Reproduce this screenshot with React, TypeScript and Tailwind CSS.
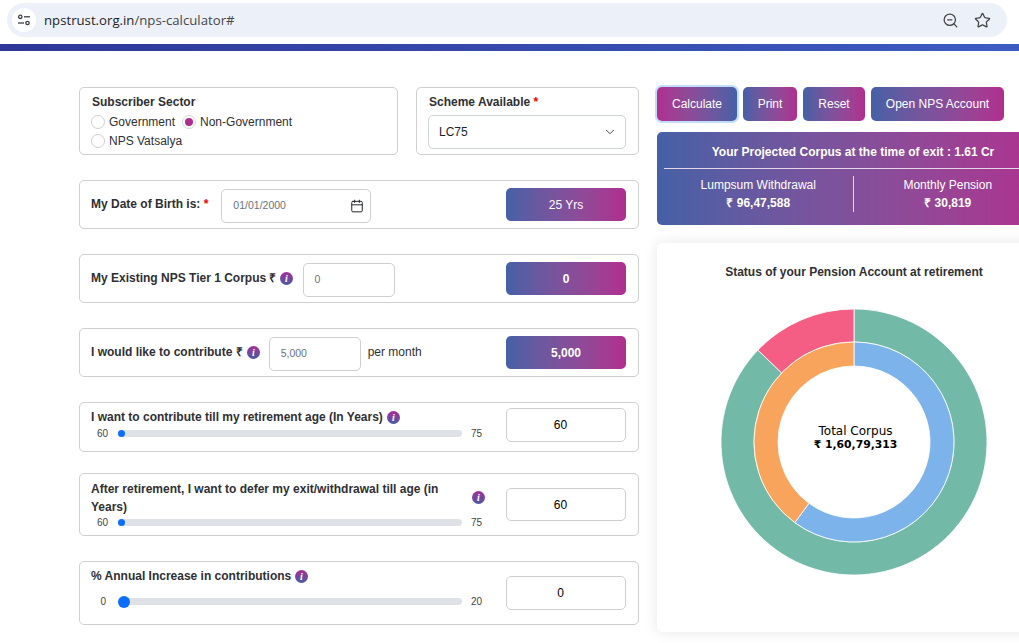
import React from "react";
import { Calendar, ChevronDown, Star, ZoomOut } from "lucide-react";

const sans = "font-['Liberation_Sans',Arial,sans-serif]";
const box = "rounded-[5px] border border-[#cfcfcf] bg-white";
const pill = "flex items-center justify-center rounded-[5px] bg-linear-to-r from-[#4460a6] to-[#b02e8f] text-white";
const numBox = "flex w-[120px] items-center justify-center rounded-[5px] border border-[#cfcfcf] pr-[11px] text-black";

function Info({ id }: { id: string }) {
  return (
    <svg width="13" height="13" viewBox="0 0 13 13" className="shrink-0">
      <defs>
        <linearGradient id={id} x1="0" y1="0" x2="0" y2="1">
          <stop offset="0" stopColor="#a52f92" />
          <stop offset="1" stopColor="#4a5aa8" />
        </linearGradient>
      </defs>
      <circle cx="6.5" cy="6.5" r="6.5" fill={`url(#${id})`} />
      <text x="6.5" y="10.3" textAnchor="middle" fill="#fff" fontSize="10" fontWeight="700" fontStyle="italic" fontFamily="Liberation Serif, serif">i</text>
    </svg>
  );
}

function Slider({ min, max, big }: { min: string; max: string; big?: boolean }) {
  return (
    <div className="flex items-center text-[10px] text-[#444]">
      <span className={`w-[32px] text-right leading-[13px] ${big ? "pr-[12px]" : "pr-[10px]"}`}>{min}</span>
      <div className="flex h-[7px] w-[344px] items-center rounded-full bg-[#dee2e6]">
        {big ? (
          <span className="h-[12px] w-[12px] rounded-full bg-[#0d6efd]" />
        ) : (
          <span className="h-[7px] w-[7px] rounded-full bg-[#0d6efd]" />
        )}
      </div>
      <span className="ml-[9px] leading-[13px]">{max}</span>
    </div>
  );
}

function Donut() {
  const cx = 134, cy = 134;
  const arc = (r1: number, r2: number, a: number, b: number) => {
    const p = (r: number, d: number) => {
      const t = (d * Math.PI) / 180;
      return `${(cx + r * Math.sin(t)).toFixed(2)} ${(cy - r * Math.cos(t)).toFixed(2)}`;
    };
    const large = b - a > 180 ? 1 : 0;
    return `M${p(r1, a)} A${r1} ${r1} 0 ${large} 1 ${p(r1, b)} L${p(r2, b)} A${r2} ${r2} 0 ${large} 0 ${p(r2, a)} Z`;
  };
  return (
    <svg width="268" height="268" viewBox="0 0 268 268">
      <g stroke="#fff" strokeWidth="0.8">
        <path d={arc(133, 100, 0, 313.7)} fill="#72b9a8" />
        <path d={arc(133, 100, 313.7, 360)} fill="#f45e84" />
        <path d={arc(100, 76, 0, 216.3)} fill="#7cb3ea" />
        <path d={arc(100, 76, 216.3, 360)} fill="#f8a45c" />
      </g>
    </svg>
  );
}

export default function App() {
  return (
    <div className={`${sans} flex h-[643px] w-[1019px] flex-col overflow-hidden bg-white text-[12px] text-[#2f2f33]`}>
      <div className="h-[44px] shrink-0 px-[7px] pt-[3px]">
        <div className="flex h-[34px] w-[1000px] items-center rounded-full bg-[#ecf1f9] pl-[5px] pr-[16px]">
          <span className="flex h-[24px] w-[24px] items-center justify-center rounded-full bg-white">
            <svg width="14" height="12" viewBox="0 0 14 12" fill="none" stroke="#3c4043" strokeWidth="1.3">
              <circle cx="3.3" cy="2.8" r="1.7" />
              <path d="M7 2.8h6" />
              <circle cx="10.5" cy="9" r="1.7" />
              <path d="M1 9h6" />
            </svg>
          </span>
          <span className="ml-[8px] pt-[1px] font-['Open_Sans',sans-serif] text-[13.2px] text-[#1f1f1f]">
            npstrust.org.in<span className="text-[#474747]">/nps-calculator#</span>
          </span>
          <span className="ml-auto flex items-center gap-[15px] text-[#444746]">
            <ZoomOut size={17} strokeWidth={1.8} />
            <Star size={17} strokeWidth={1.8} />
          </span>
        </div>
      </div>
      <div className="h-[7px] shrink-0 bg-linear-to-r from-[#2e3797] to-[#3d5cc2]" />

      <div className="flex flex-1 gap-[18px] pl-[79px] pt-[36px]">
        <div className="flex w-[560px] shrink-0 flex-col">
          <div className="flex h-[68px] gap-[18px]">
            <div className={`${box} w-[319px] pl-[12px] pt-[7px]`}>
              <div className="text-[12px] leading-[14px] font-bold">Subscriber Sector</div>
              <div className="mt-[3px] flex h-[19px] items-center">
                <span className="ml-[-1px] h-[14px] w-[14px] rounded-full border border-[#cfcfcf]" />
                <span className="ml-[4px]">Government</span>
                <span className="ml-[7px] flex h-[14px] w-[14px] items-center justify-center rounded-full border border-[#d5d5d5]">
                  <span className="h-[8px] w-[8px] rounded-full bg-[#b02e8f]" />
                </span>
                <span className="ml-[4px]">Non-Government</span>
              </div>
              <div className="flex h-[19px] items-center">
                <span className="ml-[-1px] h-[14px] w-[14px] rounded-full border border-[#cfcfcf]" />
                <span className="ml-[4px]">NPS Vatsalya</span>
              </div>
            </div>
            <div className={`${box} w-[223px] pl-[12px] pt-[7px]`}>
              <div className="text-[12px] leading-[14px] font-bold">
                Scheme Available <span className="text-[#e00]">*</span>
              </div>
              <div className="ml-[-1px] mt-[6px] flex h-[34px] w-[198px] items-center justify-between rounded-[5px] border border-[#ced4da] pl-[10px] pr-[8px] text-[12px] text-[#212529]">
                LC75
                <ChevronDown size={14} strokeWidth={1.6} className="text-[#343a40]" />
              </div>
            </div>
          </div>

          <div className={`${box} mt-[25px] flex h-[49px] items-center pl-[11px] pr-[12px]`}>
            <span className="mb-[2px] font-bold">My Date of Birth is: <span className="text-[#e00]">*</span></span>
            <div className="ml-[13px] mt-[2px] flex h-[34px] w-[150px] items-center justify-between rounded-[5px] border border-[#cfcfcf] pl-[11px] pr-[6px] text-[10.5px] text-[#6b7380]">
              01/01/2000
              <Calendar size={14} strokeWidth={1.7} className="text-[#212529]" />
            </div>
            <div className={`${pill} ml-auto h-[33px] w-[120px]`}>25 Yrs</div>
          </div>

          <div className={`${box} mt-[25px] flex h-[49px] items-center pl-[11px] pr-[12px]`}>
            <span className="mb-[2px] font-bold">My Existing NPS Tier 1 Corpus ₹</span>
            <span className="ml-[3px]"><Info id="i1" /></span>
            <div className="ml-[10px] mt-[2px] flex h-[34px] w-[92px] items-center rounded-[5px] border border-[#cfcfcf] pl-[11px] text-[10.5px] text-[#6b7380]">0</div>
            <div className={`${pill} ml-auto h-[33px] w-[120px] font-bold`}>0</div>
          </div>

          <div className={`${box} mt-[25px] flex h-[49px] items-center pl-[11px] pr-[12px]`}>
            <span className="mb-[2px] font-bold">I would like to contribute ₹</span>
            <span className="ml-[4px]"><Info id="i2" /></span>
            <div className="ml-[9px] mt-[2px] flex h-[34px] w-[92px] items-center rounded-[5px] border border-[#cfcfcf] pl-[11px] text-[10.5px] text-[#6b7380]">5,000</div>
            <span className="mb-[2px] ml-[7px]">per month</span>
            <div className={`${pill} ml-auto h-[33px] w-[120px] font-bold`}>5,000</div>
          </div>

          <div className={`${box} mt-[25px] flex h-[50px] items-center pl-[11px] pr-[12px]`}>
            <div className="flex-1 self-start pt-[7px]">
              <div className="flex items-center gap-[4px] font-bold leading-[14px]">
                I want to contribute till my retirement age (In Years) <Info id="i3" />
              </div>
              <div className="ml-[-5px] mt-[3px]"><Slider min="60" max="75" /></div>
            </div>
            <div className={`${numBox} mb-[4px] h-[34px]`}>60</div>
          </div>

          <div className={`${box} mt-[21px] flex h-[63px] items-center pl-[11px] pr-[12px]`}>
            <div className="flex-1">
              <div className="flex items-center font-bold leading-[18px]">
                <span className="w-[381px]">After retirement, I want to defer my exit/withdrawal till age (in Years)</span>
                <span className="mb-[2px]"><Info id="i4" /></span>
              </div>
              <div className="ml-[-5px]"><Slider min="60" max="75" /></div>
            </div>
            <div className={`${numBox} h-[33px]`}>60</div>
          </div>

          <div className={`${box} mt-[25px] flex h-[64px] items-center pl-[11px] pr-[12px]`}>
            <div className="flex-1 self-start pt-[7px]">
              <div className="flex items-center gap-[4px] font-bold leading-[14px]">
                % Annual Increase in contributions <Info id="i5" />
              </div>
              <div className="ml-[-5px] mt-[12px]"><Slider min="0" max="20" big /></div>
            </div>
            <div className={`${numBox} h-[34px]`}>0</div>
          </div>
        </div>

        <div className="flex w-[392px] shrink-0 flex-col">
          <div className="flex h-[34px] gap-[6px] text-white">
            <div className="flex w-[80px] items-center justify-center rounded-[5px] bg-linear-to-r from-[#b02e8f] to-[#4460a6] shadow-[0_0_0_2px_#c2dcfb]">Calculate</div>
            <div className={`${pill} w-[54px]`}>Print</div>
            <div className={`${pill} w-[62px]`}>Reset</div>
            <div className={`${pill} w-[133px]`}>Open NPS Account</div>
          </div>

          <div className={`${pill} mt-[11px] h-[93px] flex-col !justify-start rounded-[5px] px-[7px]`}>
            <div className="flex h-[37px] w-full shrink-0 items-center justify-center border-b border-[#e7d5ea] pt-[3px] font-bold">
              Your Projected Corpus at the time of exit : 1.61 Cr
            </div>
            <div className="mt-[7px] flex h-[36px] w-full">
              <div className="flex-1 border-r border-[#e7d5ea] text-center leading-[18px]">
                <div>Lumpsum Withdrawal</div>
                <div className="font-bold">₹ 96,47,588</div>
              </div>
              <div className="flex-1 text-center leading-[18px]">
                <div>Monthly Pension</div>
                <div className="font-bold">₹ 30,819</div>
              </div>
            </div>
          </div>

          <div className="mt-[18px] flex h-[389px] flex-col items-center rounded-[5px] bg-white pl-[2px] pt-[22px] shadow-[0_0_14px_rgba(0,0,0,0.1)]">
            <div className="font-bold leading-[15px]">Status of your Pension Account at retirement</div>
            <div className="relative mt-[28px]">
              <Donut />
              <div className="absolute inset-0 flex flex-col items-center justify-center pb-[9px] pl-[3px] font-['DejaVu_Sans',sans-serif] text-[12px] leading-[14px] text-black">
                <span>Total Corpus</span>
                <span className="text-[10.8px] font-bold">₹ 1,60,79,313</span>
              </div>
            </div>
          </div>
        </div>
      </div>
    </div>
  );
}
